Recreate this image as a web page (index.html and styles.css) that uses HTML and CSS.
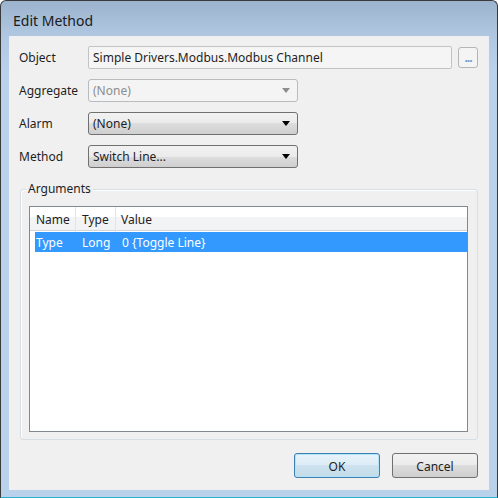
FILE: index.html
```html
<!DOCTYPE html>
<html lang="en">
<head>
    <meta charset="UTF-8">
    <title>Edit Method</title>
    <link rel="stylesheet" href="styles.css">
</head>
<body>
    <div class="window">
        <div class="titlebar">Edit Method</div>
        <div class="client">
            <div class="form">
                <label>Object</label>
                <div class="field-line">
                    <div class="textbox">Simple Drivers.Modbus.Modbus Channel</div>
                    <div class="browse">...</div>
                </div>
                <label>Aggregate</label>
                <div class="combo disabled"><span>(None)</span><span class="arrow"></span></div>
                <label>Alarm</label>
                <div class="combo"><span>(None)</span><span class="arrow"></span></div>
                <label>Method</label>
                <div class="combo"><span>Switch Line...</span><span class="arrow"></span></div>
            </div>

            <div class="group">
                <span class="legend">Arguments</span>
                <div class="list">
                    <div class="list-head">
                        <div class="col">Name</div>
                        <div class="col">Type</div>
                        <div class="col">Value</div>
                    </div>
                    <div class="list-row selected">
                        <div class="col">Type</div>
                        <div class="col">Long</div>
                        <div class="col">0 {Toggle Line}</div>
                    </div>
                </div>
            </div>

            <div class="buttons">
                <button class="btn default">OK</button>
                <button class="btn">Cancel</button>
            </div>
        </div>
    </div>
</body>
</html>
```

FILE: styles.css
```css
body {
    margin: 0;
    padding: 0;
    font-family: "Noto Sans", "Open Sans", sans-serif;
    font-size: 12px;
    color: #1e1e1e;
}
.window {
    width: 498px;
    height: 498px;
    box-sizing: border-box;
    border: 1px solid #3a3a3a;
    border-bottom-color: #2ab0d0;
    border-radius: 6px 6px 0 0;
    background: linear-gradient(#9cb3ce 0, #b0c8e2 36px, #b9d1ea 70px, #b9d1ea 100%);
    display: flex;
    flex-direction: column;
}
.titlebar {
    height: 35px;
    padding-left: 12px;
    font-size: 14px;
    line-height: 40px;
    color: #1a1a1a;
}
.client {
    margin: 0 8px 7px 8px;
    flex: 1;
    background-color: #f0f0f0;
    padding: 10px 0 0 10px;
}
.form {
    display: grid;
    grid-template-columns: 69px auto;
    grid-auto-rows: 23px;
    row-gap: 10px;
    align-items: center;
}
.form label {
    line-height: 24px;
}
.field-line {
    display: flex;
    align-items: center;
    gap: 6px;
}
.textbox {
    width: 364px;
    height: 23px;
    box-sizing: border-box;
    border: 1px solid #c3c3c3;
    border-radius: 2px;
    background-color: #f5f5f5;
    padding-left: 4px;
    line-height: 22px;
}
.browse {
    width: 20px;
    height: 21px;
    box-sizing: border-box;
    border: 1px solid #b5b5b5;
    border-radius: 3px;
    background-color: #f4f4f4;
    color: #6f9bd1;
    text-align: center;
    line-height: 19px;
    font-weight: bold;
    letter-spacing: -1px;
}
.combo {
    width: 210px;
    height: 23px;
    box-sizing: border-box;
    border: 1px solid #707070;
    border-radius: 3px;
    background: linear-gradient(#f2f2f2 0, #ebebeb 50%, #dddddd 50%, #cfcfcf 100%);
    display: flex;
    align-items: center;
    justify-content: space-between;
    padding: 0 7px 0 4px;
    line-height: 22px;
}
.arrow {
    width: 0;
    height: 0;
    border-left: 4px solid transparent;
    border-right: 4px solid transparent;
    border-top: 5px solid #000;
}
.combo.disabled {
    border-color: #b8bcbf;
    background: #f4f4f4;
    color: #8d8d8d;
}
.combo.disabled .arrow {
    border-top-color: #8d8d8d;
}
.group {
    position: relative;
    margin: 21px 0 0 1px;
    width: 458px;
    height: 251px;
    box-sizing: border-box;
    border: 1px solid #d5dfe5;
    border-radius: 3px;
    box-shadow: inset 1px 1px 0 #fff;
    padding: 16px 0 0 8px;
}
.legend {
    position: absolute;
    left: 5px;
    top: -9px;
    padding: 0 2px;
    line-height: 16px;
    background-color: #f0f0f0;
}
.list {
    width: 439px;
    height: 226px;
    box-sizing: border-box;
    border: 1px solid #828790;
    background-color: #fff;
}
.list-head {
    display: grid;
    grid-template-columns: 46px 40px 1fr;
    height: 24px;
    box-sizing: border-box;
    border-bottom: 1px solid #d5d5d5;
    background: linear-gradient(#fff 0, #fff 45%, #f3f4f6 45%, #f1f2f4 100%);
    line-height: 25px;
}
.list-head .col {
    border-right: 1px solid #e3e4e6;
    padding-left: 6px;
}
.list-head .col:last-child {
    border-right: none;
    padding-left: 5px;
}
.list-row {
    display: grid;
    grid-template-columns: 41px 40px 1fr;
    margin: 1px 0 0 5px;
    height: 20px;
    line-height: 21px;
}
.list-row .col {
    padding-left: 6px;
}
.list-row .col:first-child {
    padding-left: 1px;
}
.selected {
    background-color: #3399ff;
    color: #fff;
}
.buttons {
    display: flex;
    justify-content: flex-end;
    gap: 12px;
    margin-top: 13px;
    padding-right: 11px;
}
.btn {
    width: 86px;
    height: 25px;
    box-sizing: border-box;
    border: 1px solid #707070;
    border-radius: 3px;
    background: linear-gradient(#f2f2f2 0, #ebebeb 50%, #dddddd 50%, #cfcfcf 100%);
    font-family: inherit;
    font-size: 12px;
    color: #1e1e1e;
    padding: 1px 0 0 0;
}
.btn.default {
    border-color: #3c7fb1;
    box-shadow: inset 0 0 0 1px #b5e3f8;
    background: linear-gradient(#e8f3fa 0, #dbebf5 50%, #cde2ee 50%, #c3dbe8 100%);
}
```
